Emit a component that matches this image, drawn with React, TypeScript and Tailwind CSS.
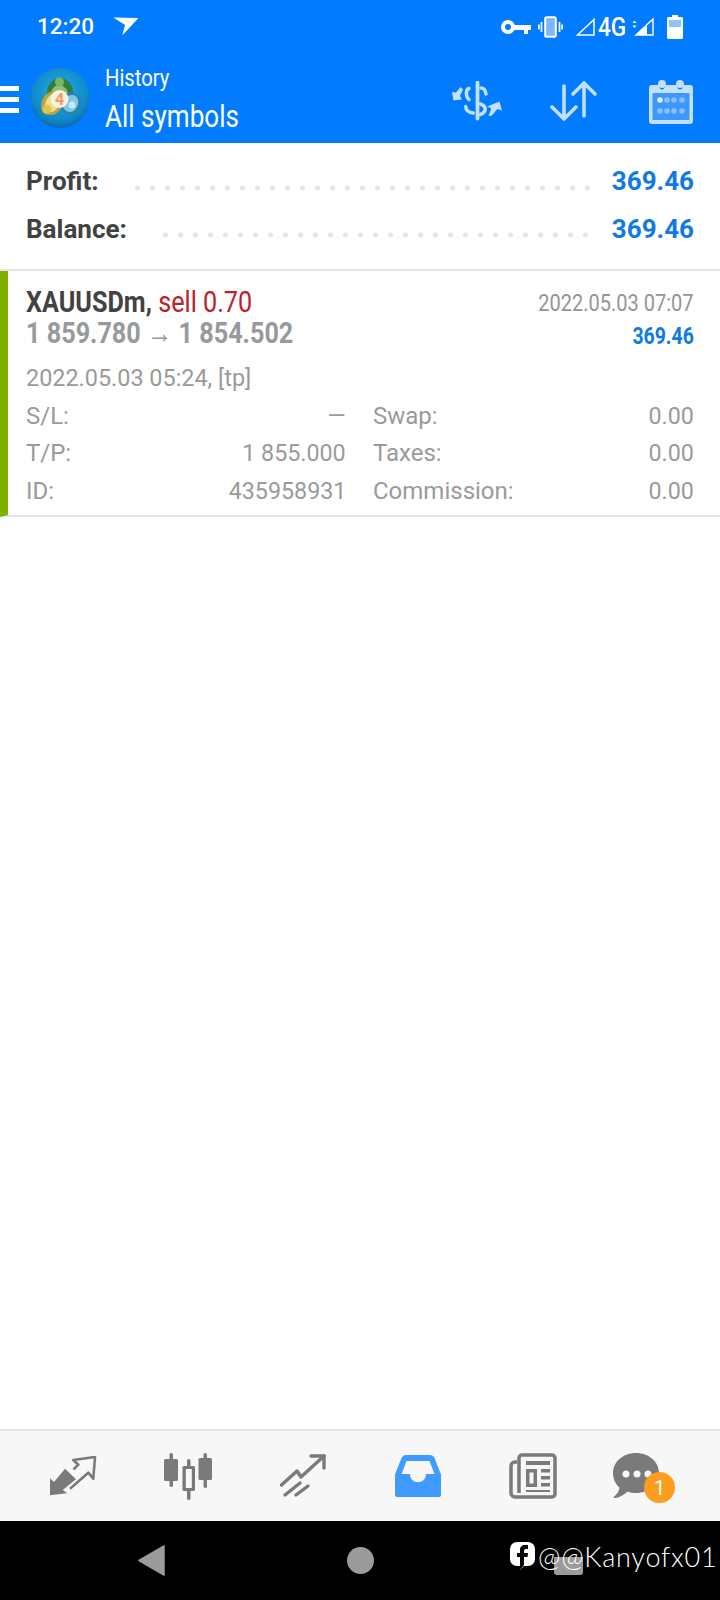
import React from "react";

const Key = () => (
  <svg width="31" height="16" viewBox="0 0 31 16" fill="none">
    <circle cx="8" cy="8" r="5" stroke="#fff" strokeWidth="4" />
    <path d="M14 6h17v5h-3v4h-4v-4h-10z" fill="#fff" />
  </svg>
);

const Vibrate = () => (
  <svg width="25" height="22" viewBox="0 0 25 22">
    <rect x="7.2" y="1.2" width="10.6" height="19.6" rx="1.5" fill="#7db6fb" stroke="#fff" strokeWidth="2" />
    <path d="M3.5 6v10M0.8 8.5v5M21.5 6v10M24.2 8.5v5" stroke="#fff" strokeWidth="1.8" />
  </svg>
);

const SignalOutline = () => (
  <svg width="19" height="18" viewBox="0 0 19 18" fill="none">
    <path d="M1.5 17L18 1.5V17z" stroke="#fff" strokeWidth="1.5" />
  </svg>
);

const SignalData = () => (
  <svg width="22" height="18" viewBox="0 0 22 18" fill="none">
    <path d="M4 17L21 1v16z" stroke="#fff" strokeWidth="1.4" />
    <path d="M4 17L15 6.700V17z" fill="#fff" />
    <path d="M0.5 5L2.5 2.5 4.5 5zM0.5 7.5L2.5 10 4.5 7.5z" fill="#fff" />
  </svg>
);

const Battery = () => (
  <svg width="16" height="24" viewBox="0 0 16 24">
    <path d="M5 0h6v2h3.5A1.5 1.5 0 0 1 16 3.5v19a1.5 1.5 0 0 1-1.500 1.500h-13A1.500 1.500 0 0 1 0 22.500v-19A1.500 1.500 0 0 1 1.500 2H5z" fill="#fff" />
    <rect x="2" y="5" width="12" height="7" fill="#8fc2fd" />
  </svg>
);

const NavArrow = () => (
  <svg width="26" height="20" viewBox="0 0 26 20" fill="#fff">
    <path d="M0.300 0.500L25.500 1 9.300 18.500 12 8z" />
  </svg>
);

const Logo = () => (
  <svg width="60" height="60" viewBox="0 0 60 60">
    <defs>
      <radialGradient id="bgGrad" cx="0.5" cy="0.4" r="0.65">
        <stop offset="0" stopColor="#22aee3" />
        <stop offset="0.7" stopColor="#1189cb" />
        <stop offset="1" stopColor="#0a5fa8" />
      </radialGradient>
    </defs>
    <circle cx="30" cy="30" r="30" fill="url(#bgGrad)" />
    {/* green figure */}
    <path d="M17 28c-1-9 4-17 12-18 9 0 15 7 14 17-1 4-5 5-14 5s-11 0-12-4z" fill="#2f7f42" />
    <path d="M21 26c0-5 4-9 8-9s9 4 9 9z" fill="#8cc26c" />
    <circle cx="29.500" cy="14" r="4.500" fill="#7cb765" />
    {/* yellow figure */}
    <path d="M12 43c-3-10 3-19 12-20 6 0 10 5 9 11-1 7-6 13-12 13-4 0-8-1-9-4z" fill="#b8a540" />
    <path d="M15 41c-1-7 3-15 10-15 4 0 6 3 5 8-1 5-5 10-9 10-3 0-6-1-6-3z" fill="#efe08a" />
    <circle cx="17" cy="41" r="4.500" fill="#dcc658" />
    {/* blue figure */}
    <path d="M30 38c-1-7 5-14 12-14 6 1 10 7 9 13-1 6-6 10-11 10-6 0-9-4-10-9z" fill="#2a83ad" />
    <path d="M33 37c0-5 4-10 9-10s7 5 6 9c-1 4-4 8-8 8s-7-3-7-7z" fill="#7ec8e6" />
    <circle cx="42" cy="37" r="3.500" fill="#c4e9f5" />
    {/* centre badge */}
    <circle cx="29.500" cy="31" r="9" fill="#faf0e4" />
    <text x="29.500" y="37" textAnchor="middle" fontSize="16" fontWeight="700" fill="#ef9d55" fontFamily="Roboto, sans-serif">4</text>
  </svg>
);

const ExchangeIcon = () => (
  <svg width="50" height="40" viewBox="0 0 50 40" fill="none" stroke="#c3e0ff" strokeLinecap="round">
    <path d="M25.500 1.500v36" strokeWidth="3.800" />
    <path d="M17 7.500c-3 1-4 7 0 11" strokeWidth="3.500" />
    <path d="M29 7c3 0 4.500 2 5 6" strokeWidth="3.500" />
    <path d="M28.500 23c6 2 6.500 8 0 10.500" strokeWidth="3.500" />
    <path d="M13.700 25.500c0 3.500 3 6 7.500 6.500" strokeWidth="3.500" />
    <path d="M0 11l4 .500L8.500 6l2.500 2.500L8 15l2 3.500-8.500 1z" fill="#c3e0ff" stroke="none" />
    <path d="M36.500 35l2.800-7.500-4.300-2 12.500-5 2.500 9-4.600-1.500-5.500 6.500z" fill="#c3e0ff" stroke="none" />
  </svg>
);

const SortIcon = () => (
  <svg width="48" height="42" viewBox="0 0 48 42" fill="none" stroke="#c3e0ff" strokeWidth="3.600" strokeLinecap="round" strokeLinejoin="round">
    <path d="M14 6v32M2 27l12 12 12-12" />
    <path d="M34 36V3M23 14L34 3l11 11" />
  </svg>
);

const CalendarIcon = () => (
  <svg width="44" height="46" viewBox="0 0 44 46">
    <circle cx="13" cy="6" r="4" fill="#c3e0ff" />
    <circle cx="31" cy="6" r="4" fill="#c3e0ff" />
    <path d="M3 7h7c0 6 6 6 6 0h12c0 6 6 6 6 0h7a3 3 0 0 1 3 3v33a3 3 0 0 1-3 3H3a3 3 0 0 1-3-3V10a3 3 0 0 1 3-3z" fill="#c3e0ff" />
    <rect x="3.500" y="15" width="37" height="27" rx="1" fill="#3e97fb" />
    <circle cx="11" cy="22" r="2.800" fill="#e4f1ff" />
    {[18, 25, 33].map((x) => <circle key={x} cx={x} cy="22" r="2.800" fill="#89c0fd" />)}
    {[11, 18, 25, 33].map((x) => <circle key={x} cx={x} cy="33" r="2.800" fill="#89c0fd" />)}
  </svg>
);

const TradeIcon = () => (
  <svg width="48" height="41" viewBox="0 0 48 41" fill="none">
    <path d="M1 22.300V39.300L18.300 37.300 13.700 34 27 23.300 16 12.700 5 26z" fill="#7a7a7a" />
    <path d="M21 32.700L39.300 16.700 44.300 22.700 46 1 24.300 4 29.300 8.700 24.500 13.500" stroke="#7a7a7a" strokeWidth="2.600" strokeLinejoin="round" />
  </svg>
);

const CandlesIcon = () => (
  <svg width="48" height="47" viewBox="0 0 48 47" fill="#7a7a7a">
    <rect x="5.500" y="0" width="3.500" height="34" rx="1.700" />
    <rect x="0" y="6" width="14" height="22" rx="1.500" />
    <rect x="23" y="6" width="3.500" height="41" rx="1.700" />
    <rect x="18.500" y="13" width="12.500" height="25" rx="1.500" />
    <rect x="21.800" y="16" width="6" height="19" fill="#f7f7f7" />
    <rect x="39.500" y="0" width="3.500" height="35" rx="1.700" />
    <rect x="34.500" y="5" width="13.500" height="22" rx="1.500" />
  </svg>
);

const TrendIcon = () => (
  <svg width="46" height="44" viewBox="0 0 46 44" fill="none" stroke="#7a7a7a" strokeWidth="3.400" strokeLinecap="round" strokeLinejoin="round">
    <path d="M1.500 31L17 17l4 6L44 2" />
    <path d="M31 2h13v12" />
    <path d="M5 41l15-12M16 41l12-9" />
  </svg>
);

const InboxIcon = () => (
  <svg width="46" height="42" viewBox="0 0 46 42">
    <path fillRule="evenodd" d="M11 0h24c2 0 3.500 1 4.500 3L45 17a6 6 0 0 1 1 3v20a2 2 0 0 1-2 2H2a2 2 0 0 1-2-2V20a6 6 0 0 1 1-3L6.500 3C7.500 1 9 0 11 0zM11.500 6L6.500 19H15c0 11 16 11 16 0h8.500L34.500 6z" fill="#3f9bff" />
  </svg>
);

const NewsIcon = () => (
  <svg width="48" height="46" viewBox="0 0 48 46" fill="none">
    <path d="M8 9H6a4 4 0 0 0-4 4v27a4 4 0 0 0 4 4h37a3 3 0 0 0 3-3V5a3 3 0 0 0-3-3H13a3 3 0 0 0-3 3v35" stroke="#7a7a7a" strokeWidth="3.500" />
    <path d="M17 8h24v4H17zM17 16h11v18H17zM32 16h9v3.500h-9zM32 23h9v3.500h-9zM32 30h9v3.500h-9zM17 37h24v2H17z" fill="#7a7a7a" />
    <rect x="20.500" y="19.500" width="4" height="11" fill="#f7f7f7" />
  </svg>
);

const ChatIcon = () => (
  <svg width="46" height="46" viewBox="0 0 46 46">
    <path d="M23 0c12.500 0 23 8.500 23 20s-10.500 20-23 20c-3 0-6-.500-8.500-1.500C11 42 6 45 1.500 45c-1 0-1.200-.800-.500-1.300 2.500-2 5-5 5.500-9C2.500 31 0 26 0 20 0 8.500 10.500 0 23 0z" fill="#7a7a7a" />
    <circle cx="13" cy="21" r="3.500" fill="#f7f7f7" />
    <circle cx="24" cy="21" r="3.500" fill="#f7f7f7" />
    <circle cx="35" cy="21" r="3.500" fill="#f7f7f7" />
  </svg>
);

const FbIcon = () => (
  <svg width="25" height="28" viewBox="0 0 25 28">
    <path fillRule="evenodd" d="M7 0h11a7 7 0 0 1 7 7v10a7 7 0 0 1-7 7h-4l-4 4v-4H7a7 7 0 0 1-7-7V7a7 7 0 0 1 7-7z" fill="#fff" />
    <path d="M10 28V15H7v-4h3V8c0-3 2-5 5-5h3v4h-2c-1 0-2 .500-2 2v2h4l-.500 4H14v8z" fill="#000" />
  </svg>
);

const dots = "h-[6px] flex-1 bg-[radial-gradient(circle,#e6e6e6_2.300px,transparent_2.800px)] bg-[length:15px_6px] bg-repeat-x";

const summary = [
  ["Profit:", "369.46"],
  ["Balance:", "369.46"],
];

const details = [
  ["S/L:", "—", "Swap:", "0.00"],
  ["T/P:", "1 855.000", "Taxes:", "0.00"],
  ["ID:", "435958931", "Commission:", "0.00"],
];

export default function App() {
  return (
    <div className="w-[720px] h-[1600px] flex flex-col bg-white overflow-hidden font-['Roboto',sans-serif]">
      {/* Blue header with status bar */}
      <header className="h-[143px] shrink-0 bg-[#017bff] text-white flex flex-col">
        <div className="h-[53px] flex items-center pl-[37px] pr-[37px]">
          <span className="text-[22.500px] font-medium">12:20</span>
          <span className="ml-[19px]"><NavArrow /></span>
          <div className="ml-auto flex items-center">
            <Key />
            <span className="ml-[7px]"><Vibrate /></span>
            <span className="ml-[13px]"><SignalOutline /></span>
            <span className="ml-[3px] text-[26px] font-medium leading-none inline-block w-[28px] scale-x-[0.87] origin-left">4G</span>
            <span className="ml-[6px]"><SignalData /></span>
            <span className="ml-[13px]"><Battery /></span>
          </div>
        </div>
        <div className="flex-1 flex items-center relative">
          <div className="w-[19px] flex flex-col gap-[6px] mt-[3px]">
            <span className="h-[5px] bg-white" />
            <span className="h-[5px] bg-white" />
            <span className="h-[5px] bg-white" />
          </div>
          <span className="ml-[11px]"><Logo /></span>
          <div className="ml-[15px] flex flex-col mt-[6px]">
            <span className="text-[23px] leading-[28px] inline-block scale-x-[0.88] origin-left whitespace-nowrap">History</span>
            <span className="text-[31px] leading-[40px] mt-[4px] inline-block scale-x-[0.84] origin-left whitespace-nowrap">All symbols</span>
          </div>
          <div className="ml-auto flex items-center mr-[27px] mt-[6px]">
            <ExchangeIcon />
            <span className="ml-[48px]"><SortIcon /></span>
            <span className="ml-[51px]"><CalendarIcon /></span>
          </div>
        </div>
      </header>

      {/* Totals */}
      <section className="h-[128px] shrink-0 border-b-2 border-[#e5e5e5] pl-[26px] pr-[26px] pt-[21px] flex flex-col gap-[12.500px]">
        {summary.map(([label, value]) => (
          <div key={label} className="h-[35px] flex items-center text-[26px] font-bold">
            <span className="text-[#424242]">{label}</span>
            <span className={`ml-[31px] mr-[22px] mt-[12px] ${dots}`} />
            <span className="text-[#0f7ae5]">{value}</span>
          </div>
        ))}
      </section>

      {/* Deal row */}
      <section className="h-[246px] shrink-0 border-b-2 border-[#e5e5e5] border-l-[8px] border-l-[#7fb200] pl-[18px] pr-[26px] pt-[13px]">
        <div className="flex justify-between h-[36px] items-center">
          <div className="text-[30px] font-bold leading-none scale-x-[0.84] origin-left whitespace-nowrap text-[#424242]">
            XAUUSDm, <span className="font-normal text-[#b92226]">sell 0.70</span>
          </div>
          <div className="mt-[3px] text-[23px] leading-none scale-x-[0.87] origin-right whitespace-nowrap text-[#959595]">2022.05.03 07:07</div>
        </div>
        <div className="flex justify-between h-[26px] items-center">
          <div className="text-[30px] font-bold leading-none scale-x-[0.84] origin-left whitespace-nowrap text-[#97999c]">
            1 859.780 <span className="font-normal">→</span> 1 854.502
          </div>
          <div className="mt-[6px] text-[24px] font-bold leading-none scale-x-[0.81] origin-right text-[#0f7ae5]">369.46</div>
        </div>
        <div className="mt-[15px] h-[34px] flex items-center text-[24px] text-[#9a9a9a] leading-none scale-x-[0.975] origin-left whitespace-nowrap">2022.05.03 05:24, [tp]</div>
        <div className="mt-[2px] flex flex-col">
          {details.map(([l1, v1, l2, v2]) => (
            <div key={l1} className="h-[37.500px] flex items-center text-[24px] text-[#9a9a9a] leading-none whitespace-nowrap">
              <div className="w-[320px] flex justify-between">
                <span>{l1}</span>
                <span className="scale-x-[0.97] origin-right">{v1}</span>
              </div>
              <div className="ml-[27px] flex-1 flex justify-between">
                <span>{l2}</span>
                <span className="scale-x-[0.97] origin-right">{v2}</span>
              </div>
            </div>
          ))}
        </div>
      </section>

      <div className="flex-1" />

      {/* Bottom tabs */}
      <nav className="h-[92px] shrink-0 border-t-2 border-[#e5e5e5] bg-[#f7f7f7] flex pl-[15px]">
        <div className="w-[115px] flex items-center justify-center"><TradeIcon /></div>
        <div className="w-[115px] flex items-center justify-center"><CandlesIcon /></div>
        <div className="w-[115px] flex items-center justify-center"><TrendIcon /></div>
        <div className="w-[115px] flex items-center justify-center"><InboxIcon /></div>
        <div className="w-[115px] flex items-center justify-center"><NewsIcon /></div>
        <div className="flex-1 flex items-center pl-[23px]">
          <div className="relative">
            <ChatIcon />
            <span className="absolute left-[31px] top-[19px] w-[31px] h-[31px] rounded-full bg-[#ff9d1e] text-white text-[20px] flex items-center justify-center">1</span>
          </div>
        </div>
      </nav>

      {/* Android navigation bar */}
      <footer className="h-[79px] shrink-0 bg-black relative flex items-center">
        <svg className="ml-[138px]" width="27" height="31" viewBox="0 0 27 31">
          <path d="M26 1L1 15.500 26 30z" fill="#9b9b9b" stroke="#9b9b9b" strokeWidth="1.500" strokeLinejoin="round" />
        </svg>
        <span className="ml-[182px] w-[27px] h-[27px] rounded-full bg-[#9b9b9b]" />
        <span className="ml-[180px] mt-[11px] w-[29px] h-[18px] rounded-b-[3px] bg-[#9b9b9b]" />
        <div className="absolute left-[510px] top-[21px] flex items-center text-white">
          <FbIcon />
          <span className="ml-[3px] text-[27px] font-light leading-none font-['Lato',sans-serif] tracking-[0.8px] whitespace-nowrap">@@Kanyofx01</span>
        </div>
      </footer>
    </div>
  );
}
